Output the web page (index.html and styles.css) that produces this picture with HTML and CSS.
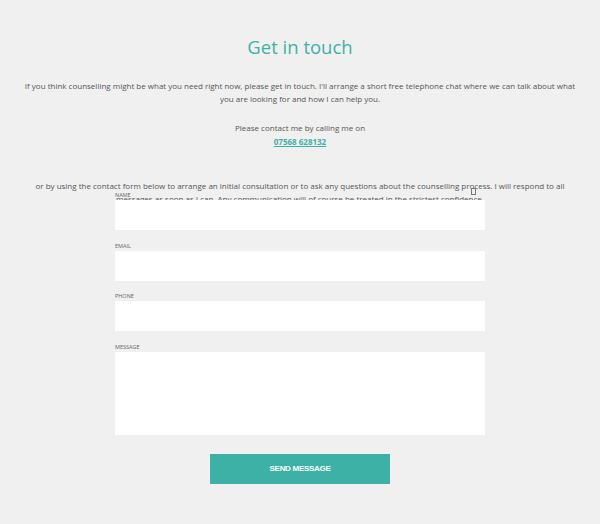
FILE: index.html
```html
<!DOCTYPE html>
<html lang="en">
<head>
<meta charset="utf-8">
<title>Get in touch</title>
<link rel="stylesheet" href="styles.css">
</head>
<body>
<main class="contact">
  <h1 class="title">Get in touch</h1>
  <p class="intro">If you think counselling might be what you need right now, please get in touch. I'll arrange a short free telephone chat where we can talk about what you are looking for and how I can help you.</p>
  <p class="call">Please contact me by calling me on<br><a class="phone" href="#">07568 628132</a></p>
  <div class="form-note">
    <p class="note">or by using the contact form below to arrange an initial consultation or to ask any questions about the counselling process. I will respond to all messages as soon as I can. Any communication will of course be treated in the strictest confidence.</p>
  </div>
  <form class="form">
    <span class="tofu"></span>
    <label class="field">
      <span class="label">NAME</span>
      <input class="input" type="text">
    </label>
    <label class="field">
      <span class="label">EMAIL</span>
      <input class="input" type="text">
    </label>
    <label class="field">
      <span class="label">PHONE</span>
      <input class="input" type="text">
    </label>
    <label class="field">
      <span class="label">MESSAGE</span>
      <textarea class="input textarea"></textarea>
    </label>
    <button class="send" type="button">SEND MESSAGE</button>
  </form>
</main>
</body>
</html>
```

FILE: styles.css
```css
html, body {
  margin: 0;
  padding: 0;
  background: #f0f0f0;
}

body {
  font-family: "Open Sans", "Liberation Sans", sans-serif;
  color: #555;
}

.contact {
  width: 556px;
  margin: 0 auto;
  padding-top: 34px;
  text-align: center;
}

.title {
  margin: 0;
  font-size: 18.5px;
  font-weight: 400;
  line-height: 26px;
  color: #3fb1a6;
}

.intro {
  margin: 19px 0 0;
  font-size: 8px;
  line-height: 13px;
}

.call {
  margin: 16px 0 0;
  font-size: 8px;
  line-height: 14px;
}

.phone {
  color: #3fb1a6;
  font-weight: 700;
}

.form-note {
  height: 13px;
  margin-top: 30px;
}

.note {
  margin: 0;
  font-size: 8px;
  line-height: 13px;
}

.form {
  position: relative;
  width: 370px;
  margin: 0 auto;
  display: flex;
  flex-direction: column;
  align-items: stretch;
  text-align: left;
}

.tofu {
  position: absolute;
  top: -4px;
  right: 9px;
  width: 3px;
  height: 5px;
  border: 1px solid #777;
}

.field {
  display: flex;
  flex-direction: column;
  margin-bottom: 12.7px;
}

.label {
  font-size: 5.5px;
  line-height: 7px;
  color: #666;
  margin-bottom: 1px;
}

.input {
  display: block;
  box-sizing: border-box;
  width: 100%;
  height: 30px;
  margin: 0;
  border: 0;
  padding: 0;
  background: #fff;
  font: inherit;
  resize: none;
}

.textarea {
  height: 83px;
}

.send {
  align-self: center;
  width: 180px;
  height: 30px;
  margin-top: 6px;
  border: 0;
  background: #3eb1a6;
  color: #fff;
  font-family: "Liberation Sans", Arial, sans-serif;
  font-weight: 700;
  font-size: 8px;
  letter-spacing: -0.3px;
}
```
